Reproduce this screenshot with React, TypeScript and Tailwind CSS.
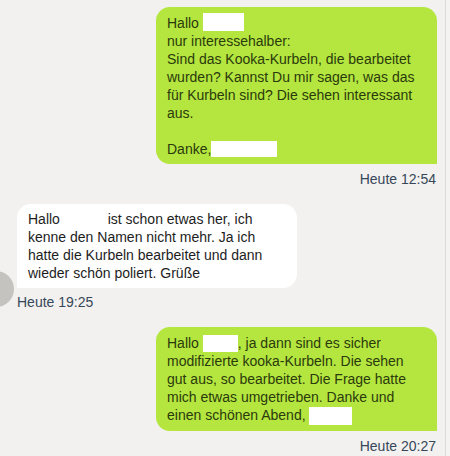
import type { ReactNode } from 'react';

interface Message {
  id: number;
  outgoing: boolean;
  time: string;
  body: ReactNode;
}

// Hidden names are shown as plain white boxes
function Redacted({ className }: { className: string }) {
  return <span className={`inline-block bg-white align-middle ${className}`} />;
}

const messages: Message[] = [
  {
    id: 1,
    outgoing: true,
    time: 'Heute 12:54',
    body: (
      <>
        Hallo <Redacted className="w-[41px] h-[18px] -mt-[4px]" />
        <br />
        nur interessehalber:
        <br />
        Sind das Kooka-Kurbeln, die bearbeitet wurden? Kannst Du mir sagen, was das für Kurbeln sind? Die sehen
        interessant aus.
        <br />
        <br />
        Danke,<Redacted className="w-[66px] h-[16px] -mt-[2px]" />
      </>
    ),
  },
  {
    id: 2,
    outgoing: false,
    time: 'Heute 19:25',
    body: (
      <>
        Hallo <Redacted className="w-[40px] h-[16px]" /> ist schon etwas her, ich kenne den Namen nicht mehr. Ja ich
        hatte die Kurbeln bearbeitet und dann wieder schön poliert. Grüße
      </>
    ),
  },
  {
    id: 3,
    outgoing: true,
    time: 'Heute 20:27',
    body: (
      <>
        Hallo <Redacted className="w-[35px] h-[17px] -mt-[3px]" />, ja dann sind es sicher modifizierte
        kooka-Kurbeln. Die sehen gut aus, so bearbeitet. Die Frage hatte mich etwas umgetrieben. Danke und einen
        schönen Abend, <Redacted className="w-[43px] h-[18px] -mt-[2px]" />
      </>
    ),
  },
];

export default function App() {
  return (
    <div
      className="flex h-[456px] w-[450px] overflow-hidden bg-[#f2f1ef] text-[14px] leading-[18px]"
      style={{ fontFamily: '"Liberation Sans", Arial, sans-serif' }}
    >
      <div className="flex-1 pt-[7px] pl-[17px] pr-[8px]">
        {messages.map((msg, index) => (
          <div key={msg.id} className={index === 0 ? '' : 'mt-[16px]'}>
            {msg.outgoing ? (
              <div className="flex flex-col items-end">
                <div className="w-[281px] rounded-t-[14px] rounded-bl-[14px] bg-[#b4e63f] pl-[11px] pr-[14px] pt-[7px] pb-[6px] text-[#2b3a0c]">
                  {msg.body}
                </div>
                <div className="mt-[6px] pr-[1px] text-[#37475a]">{msg.time}</div>
              </div>
            ) : (
              <div className="relative flex flex-col items-start">
                <div className="absolute left-[-39px] top-[67px] h-[36px] w-[36px] rounded-full bg-[#c4c3bf]" />
                <div className="w-[280px] rounded-t-[14px] rounded-br-[14px] bg-white pl-[11px] pr-[14px] pt-[6px] pb-[6px] text-[#1d1d1d]">
                  {msg.body}
                </div>
                <div className="mt-[5px] text-[#37475a]">{msg.time}</div>
              </div>
            )}
          </div>
        ))}
      </div>
      <div className="w-[5px] border-l border-[#dcdad6] bg-[#f4f3f1]" />
    </div>
  );
}
